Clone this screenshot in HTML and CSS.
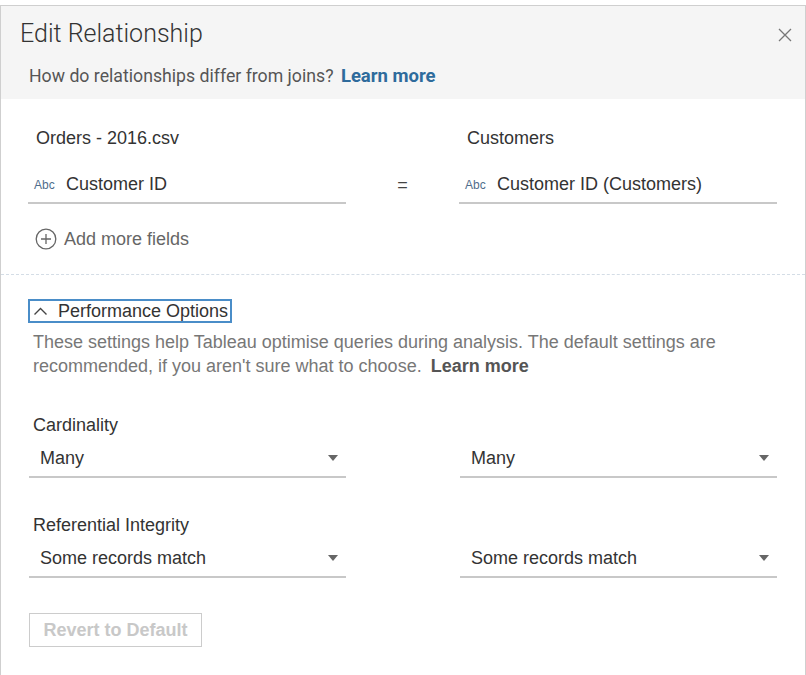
FILE: index.html
```html
<!DOCTYPE html>
<html>
<head>
<meta charset="utf-8">
<link rel="stylesheet" href="styles.css">
</head>
<body>
<div class="dialog">
  <div class="header">
    <div class="title-row">
      <h1 class="title">Edit Relationship</h1>
      <svg class="close" width="14" height="14" viewBox="0 0 14 14"><path d="M1 1 L13 13 M13 1 L1 13" stroke="#777" stroke-width="1.3" fill="none"/></svg>
    </div>
    <p class="subtitle">How do relationships differ from joins? <a class="link-blue">Learn more</a></p>
  </div>

  <div class="mapping">
    <div class="col">
      <div class="src-label">Orders - 2016.csv</div>
      <div class="field"><span class="abc">Abc</span><span class="field-name">Customer ID</span></div>
      <div class="add">
        <svg width="22" height="22" viewBox="0 0 22 22"><circle cx="11" cy="11" r="9.8" stroke="#666" stroke-width="1.3" fill="none"/><path d="M11 6 V16 M6 11 H16" stroke="#666" stroke-width="1.3"/></svg>
        <span>Add more fields</span>
      </div>
    </div>
    <div class="eq">=</div>
    <div class="col">
      <div class="src-label">Customers</div>
      <div class="field"><span class="abc">Abc</span><span class="field-name">Customer ID (Customers)</span></div>
    </div>
  </div>

  <div class="perf">
    <div class="perf-btn-row">
      <button class="perf-btn">
        <svg width="15" height="10" viewBox="0 0 15 10"><path d="M1.5 8.5 L7.5 2.5 L13.5 8.5" stroke="#444" stroke-width="1.4" fill="none"/></svg>
        <span>Performance Options</span>
      </button>
    </div>
    <p class="desc">These settings help Tableau optimise queries during analysis. The default settings are recommended, if you aren't sure what to choose. <b class="link-grey">Learn more</b></p>

    <div class="opt-label">Cardinality</div>
    <div class="selects">
      <div class="select"><span>Many</span><span class="arrow"></span></div>
      <div class="select"><span>Many</span><span class="arrow"></span></div>
    </div>

    <div class="opt-label ri">Referential Integrity</div>
    <div class="selects">
      <div class="select"><span>Some records match</span><span class="arrow"></span></div>
      <div class="select"><span>Some records match</span><span class="arrow"></span></div>
    </div>

    <button class="revert">Revert to Default</button>
  </div>
</div>
</body>
</html>
```
FILE: styles.css
```css
html, body {
  margin: 0;
  padding: 0;
  background: #fff;
  overflow: hidden;
}
body {
  font-family: "Liberation Sans", Arial, sans-serif;
  color: #333;
}
.dialog {
  margin: 5px 0 0 0;
  width: 804px;
  height: 700px;
  border: 1px solid #cfcfcf;
  border-bottom: none;
  background: #fff;
}
.header {
  background: #f5f5f5;
  height: 93px;
  box-sizing: border-box;
  padding: 13px 13px 0 19px;
}
.title-row {
  display: flex;
  justify-content: space-between;
  align-items: center;
}
.title {
  margin: 0;
  font-family: "Roboto", "Liberation Sans", sans-serif;
  font-weight: 300;
  font-size: 25px;
  line-height: 30px;
  color: #333;
}
.close {
  margin-top: 2px;
}
.subtitle {
  margin: 16px 0 0 9px;
  font-family: "Roboto", "Liberation Sans", sans-serif;
  font-size: 17.7px;
  line-height: 22px;
  color: #555;
}
.link-blue {
  font-weight: 700;
  font-size: 18.5px;
  color: #2e6b9c;
  margin-left: 3px;
}
.mapping {
  display: grid;
  grid-template-columns: 318px 113px 318px;
  padding: 28px 0 0 27px;
  height: 176px;
  box-sizing: border-box;
  border-bottom: 1px dashed #d4dde6;
}
.src-label {
  font-size: 18px;
  line-height: 22px;
  padding-left: 8px;
  color: #333;
}
.field {
  margin-top: 22px;
  height: 33px;
  box-sizing: border-box;
  border-bottom: 2px solid #c8c8c8;
  display: flex;
  align-items: center;
  padding: 0 0 4px 6px;
}
.abc {
  font-size: 12px;
  color: #4f6d8c;
  width: 32px;
}
.field-name {
  font-size: 18px;
  color: #333;
}
.eq {
  font-size: 18px;
  text-align: center;
  padding-top: 48px;
  color: #444;
}
.add {
  display: flex;
  align-items: center;
  gap: 7px;
  margin-top: 24px;
  padding-left: 7px;
  font-size: 18px;
  color: #666;
}
.perf {
  padding: 24px 0 0 27px;
}
.perf-btn {
  display: flex;
  align-items: center;
  gap: 10px;
  height: 24px;
  padding: 0 2px 0 3px;
  border: 2px solid #4a8dc8;
  background: #fff;
  font-family: "Liberation Sans", Arial, sans-serif;
  font-size: 18px;
  color: #333;
  margin: 0;
}
.desc {
  margin: 7px 0 0 5px;
  width: 720px;
  font-size: 18px;
  line-height: 24px;
  color: #777;
  word-spacing: 0;
}
.link-grey {
  color: #555;
  margin-left: 4px;
}
.opt-label {
  margin: 35px 0 0 5px;
  font-size: 18px;
  line-height: 24px;
  color: #333;
}
.opt-label.ri {
  margin-top: 35px;
}
.selects {
  display: grid;
  grid-template-columns: 317px 317px;
  column-gap: 114px;
  margin-top: 9px;
  padding-left: 1px;
}
.select {
  height: 32px;
  box-sizing: border-box;
  border-bottom: 2px solid #c8c8c8;
  display: flex;
  justify-content: space-between;
  align-items: center;
  padding: 0 8px 6px 11px;
  font-size: 18px;
  color: #333;
}
.arrow {
  width: 0;
  height: 0;
  border-left: 5.5px solid transparent;
  border-right: 5.5px solid transparent;
  border-top: 6px solid #666;
}
.revert {
  margin: 35px 0 0 1px;
  width: 173px;
  height: 34px;
  border: 1px solid #ccc;
  background: #fff;
  font-family: "Liberation Sans", Arial, sans-serif;
  font-weight: 700;
  font-size: 18px;
  color: #c8c8c8;
}
```
